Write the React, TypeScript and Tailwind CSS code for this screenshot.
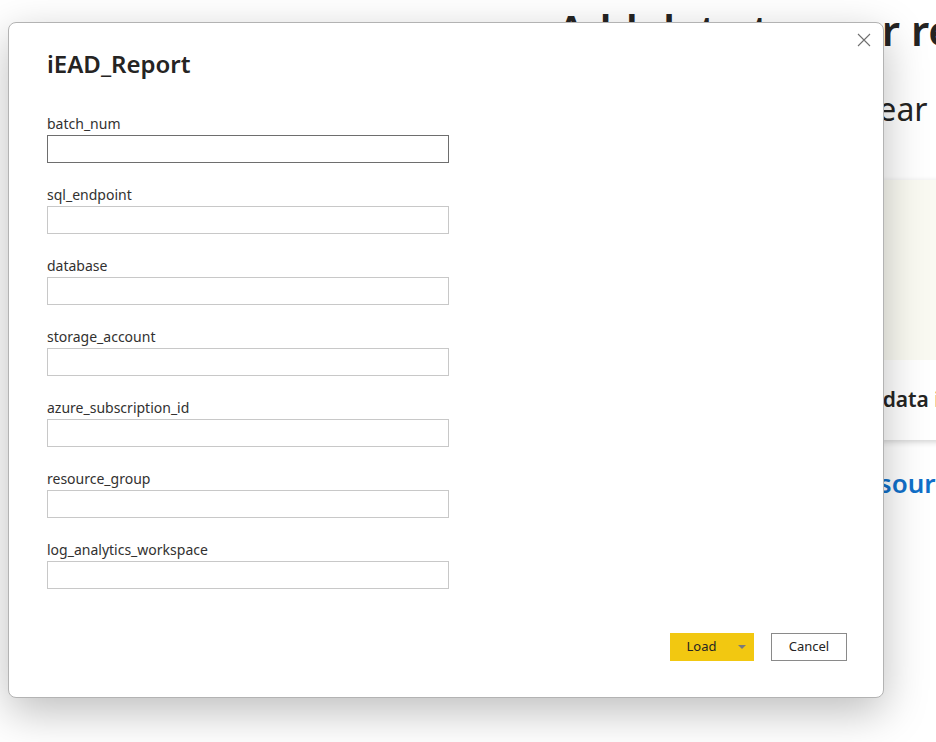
import React from 'react';

const fields = [
  'batch_num',
  'sql_endpoint',
  'database',
  'storage_account',
  'azure_subscription_id',
  'resource_group',
  'log_analytics_workspace',
];

function Field({ name, focused }: { name: string; focused?: boolean }) {
  return (
    <div className="flex flex-col mb-[22px]">
      <label className="h-[20px] text-[14px] leading-[20px] text-[#323130]">{name}</label>
      <input
        type="text"
        className={
          'mt-[1px] h-[28px] w-[402px] bg-white outline-none border ' +
          (focused ? 'border-[#6e6e6e]' : 'border-[#c8c8c8]')
        }
      />
    </div>
  );
}

function CloseIcon() {
  return (
    <svg width="14" height="14" viewBox="0 0 14 14" fill="none">
      <path d="M1 1L13 13M13 1L1 13" stroke="#6f6f6f" strokeWidth="1.1" />
    </svg>
  );
}

export default function App() {
  return (
    <div
      className="relative w-[936px] h-[742px] overflow-hidden bg-white"
      style={{ fontFamily: '"Segoe UI", "Noto Sans", "Open Sans", sans-serif' }}
    >
      {/* Page behind the dialog */}
      <div className="flex flex-col pl-[557px] pt-[2px]">
        <h1 className="whitespace-nowrap text-[42px] leading-[56px] font-semibold text-[#252423]">
          Add data to your report
        </h1>
        <p className="ml-[-153px] mt-[30px] whitespace-nowrap text-[32px] leading-[42px] text-[#252423]">
          Once loaded, your data will appear in the Data pane.
        </p>
        <div className="ml-[260px] mt-[50px] w-[300px] flex flex-col bg-white shadow-[0_2px_6px_rgba(0,0,0,0.18)]">
          <div className="h-[180px] bg-[#fafaf2]" />
          <div className="h-[80px] flex items-center justify-center text-[21px] font-semibold text-[#252423] whitespace-nowrap">
            Paste data into a blank table
          </div>
        </div>
        <a className="ml-[30px] mt-[26px] whitespace-nowrap text-[26px] leading-[34px] font-semibold text-[#1170c9]">
          Get data from another source
        </a>
      </div>

      {/* Dialog overlay */}
      <div className="absolute left-[8px] top-[22px] w-[876px] h-[676px] bg-white rounded-[8px] border border-[#b3b3b3] shadow-[0_14px_44px_rgba(0,0,0,0.26)] flex flex-col pl-[38px] pr-[36px] pt-[25px]">
        <button className="absolute right-[12px] top-[10px] p-0 bg-transparent">
          <CloseIcon />
        </button>
        <h2 className="text-[24px] leading-[32px] font-semibold text-[#252423]">iEAD_Report</h2>
        <div className="mt-[34px] flex flex-col">
          {fields.map((f, i) => (
            <Field key={f} name={f} focused={i === 0} />
          ))}
        </div>
        <div className="mt-[22px] flex justify-end gap-[17px]">
          <button className="h-[28px] w-[84px] flex bg-[#f2c811] text-[13px] text-[#252423]">
            <span className="flex-1 flex items-center justify-center pl-[3px]">Load</span>
            <span className="w-[24px] flex items-center justify-center">
              <svg width="8" height="4" viewBox="0 0 8 4">
                <path d="M0 0H8L4 4Z" fill="#7a7a7a" />
              </svg>
            </span>
          </button>
          <button className="h-[28px] w-[76px] border border-[#8a8a8a] bg-white text-[13px] text-[#252423]">
            Cancel
          </button>
        </div>
      </div>
    </div>
  );
}
